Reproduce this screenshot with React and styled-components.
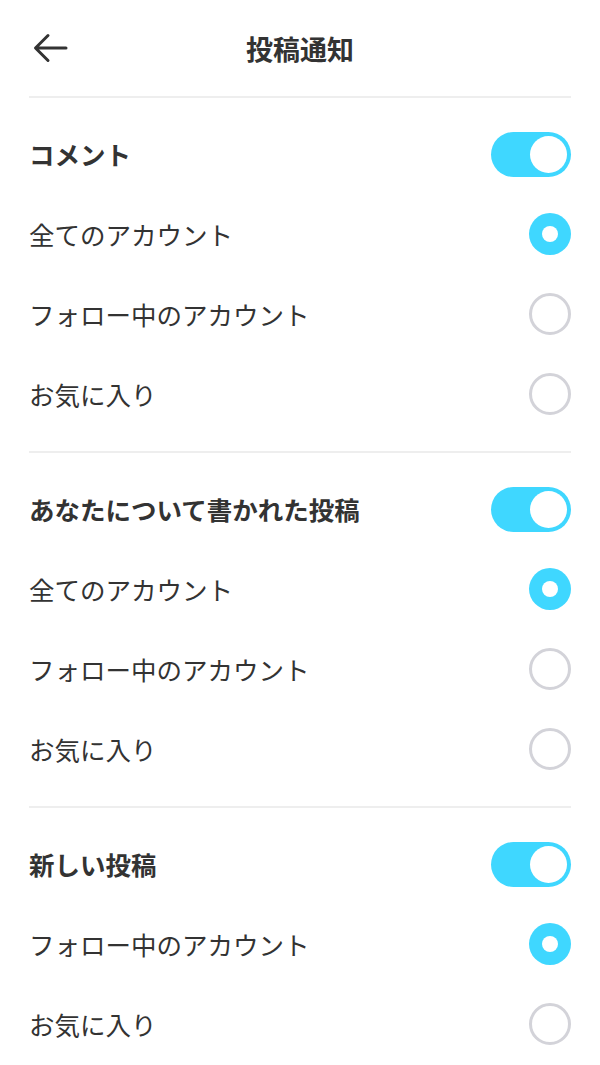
import * as React from 'react';
import styled, { createGlobalStyle } from 'styled-components';

const GlobalStyles = createGlobalStyle`
  html, body {
    margin: 0;
    padding: 0;
    background: #fff;
  }
  body {
    font-family: "Noto Sans CJK JP", "Noto Sans", sans-serif;
    color: #333;
  }
`;

const Page = styled.div`
  width: 600px;
  padding: 0 29px;
  box-sizing: border-box;
`;

const Header = styled.header`
  height: 96px;
  display: flex;
  align-items: center;
  justify-content: center;
  position: relative;
  border-bottom: 2px solid #eeeeee;
`;

const BackButton = styled.button`
  position: absolute;
  left: 4px;
  top: 30px;
  width: 36px;
  height: 36px;
  padding: 0;
  border: none;
  background: none;
  display: flex;
  align-items: center;
  justify-content: center;
  color: #333;
`;

const Title = styled.h1`
  margin: 0;
  font-size: 27px;
  font-weight: 700;
  line-height: 1;
  color: #333;
`;

const Section = styled.section`
  padding: 16px 0 17px;
  border-bottom: ${(p) => (p.last ? 'none' : '2px solid #eeeeee')};
`;

const Row = styled.div`
  height: 80px;
  display: flex;
  align-items: center;
  justify-content: space-between;
`;

const Label = styled.span`
  font-size: 25.5px;
  font-weight: ${(p) => (p.bold ? 700 : 400)};
  color: #333;
  line-height: 1;
`;

const Toggle = styled.div`
  width: 80px;
  height: 45px;
  border-radius: 23px;
  background: ${(p) => (p.on ? '#3fd7ff' : '#d3d3d8')};
  display: flex;
  align-items: center;
  justify-content: ${(p) => (p.on ? 'flex-end' : 'flex-start')};
  padding: 0 4px;
  box-sizing: border-box;
`;

const Knob = styled.div`
  width: 37px;
  height: 37px;
  border-radius: 50%;
  background: #fff;
`;

const Radio = styled.div`
  width: 42px;
  height: 42px;
  border-radius: 50%;
  box-sizing: border-box;
  display: flex;
  align-items: center;
  justify-content: center;
  background: ${(p) => (p.checked ? '#3fd7ff' : '#fff')};
  border: ${(p) => (p.checked ? 'none' : '3px solid #d3d3d9')};
`;

const Dot = styled.div`
  width: 16px;
  height: 16px;
  border-radius: 50%;
  background: #fff;
`;

const BackArrow = () => (
  <svg width="36" height="36" viewBox="0 0 36 36" fill="none">
    <path
      d="M33 18H3M15 5.5L2.5 18L15 30.5"
      stroke="#333"
      strokeWidth="3"
      strokeLinecap="round"
      strokeLinejoin="round"
    />
  </svg>
);

const sections = [
  {
    title: 'コメント',
    options: ['全てのアカウント', 'フォロー中のアカウント', 'お気に入り'],
    selected: 0,
  },
  {
    title: 'あなたについて書かれた投稿',
    options: ['全てのアカウント', 'フォロー中のアカウント', 'お気に入り'],
    selected: 0,
  },
  {
    title: '新しい投稿',
    options: ['フォロー中のアカウント', 'お気に入り'],
    selected: 0,
  },
];

const App = () => (
  <>
    <GlobalStyles />
    <Page>
      <Header>
        <BackButton aria-label="戻る">
          <BackArrow />
        </BackButton>
        <Title>投稿通知</Title>
      </Header>
      {sections.map((s, i) => (
        <Section key={s.title} last={i === sections.length - 1}>
          <Row>
            <Label bold>{s.title}</Label>
            <Toggle on>
              <Knob />
            </Toggle>
          </Row>
          {s.options.map((o, j) => (
            <Row key={o}>
              <Label>{o}</Label>
              <Radio checked={j === s.selected}>{j === s.selected && <Dot />}</Radio>
            </Row>
          ))}
        </Section>
      ))}
    </Page>
  </>
);

export default App;
